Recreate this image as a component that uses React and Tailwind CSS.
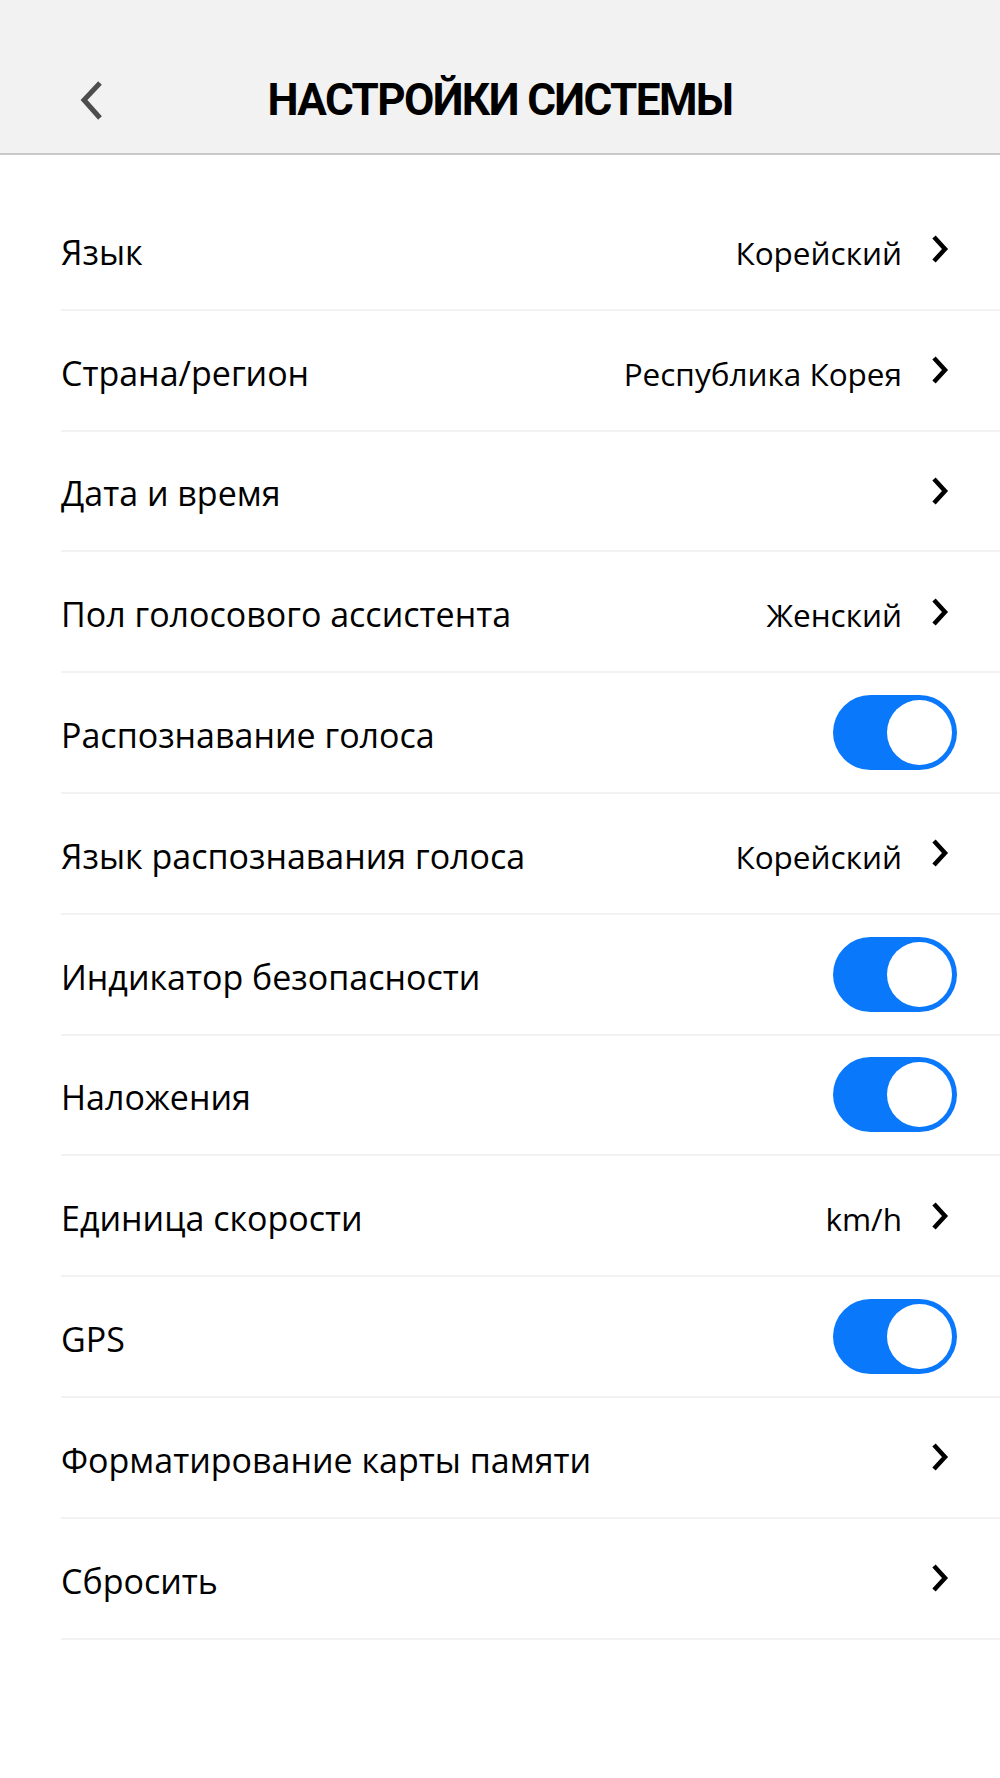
import React from "react";

const rows = [
  { label: "Язык", value: "Корейский", type: "link" },
  { label: "Страна/регион", value: "Республика Корея", type: "link" },
  { label: "Дата и время", value: "", type: "link" },
  { label: "Пол голосового ассистента", value: "Женский", type: "link" },
  { label: "Распознавание голоса", type: "toggle" },
  { label: "Язык распознавания голоса", value: "Корейский", type: "link" },
  { label: "Индикатор безопасности", type: "toggle" },
  { label: "Наложения", type: "toggle" },
  { label: "Единица скорости", value: "km/h", type: "link" },
  { label: "GPS", type: "toggle" },
  { label: "Форматирование карты памяти", value: "", type: "link" },
  { label: "Сбросить", value: "", type: "link" },
];

function Chevron() {
  return (
    <svg width="20" height="30" viewBox="0 0 20 30" className="shrink-0">
      <path d="M4 3 L15 15 L4 27" fill="none" stroke="#000" strokeWidth="4.5" strokeLinecap="butt" strokeLinejoin="miter" />
    </svg>
  );
}

function Toggle() {
  return (
    <div className="w-[124px] h-[75px] rounded-full bg-[#0a78fb] relative -mr-[7px] shrink-0">
      <div className="absolute right-[5px] top-[5px] w-[65px] h-[65px] rounded-full bg-white"></div>
    </div>
  );
}

export default function App() {
  return (
    <div className="w-[1000px] min-h-[1778px] bg-white text-black" style={{ fontFamily: "'Open Sans', 'Noto Sans', sans-serif" }}>
      <div className="h-[155px] bg-[#f2f2f2] border-b-2 border-[#c8c8c8] relative flex items-center justify-center">
        <div className="absolute left-[76px] top-[80px]">
          <svg width="30" height="42" viewBox="0 0 30 42">
            <path d="M24 3 L8 20 L24 38" fill="none" stroke="#4d4d4d" strokeWidth="5" />
          </svg>
        </div>
        <h1 className="text-[44px] font-bold tracking-[-1.6px] mt-[46px] leading-none" style={{ fontFamily: "'Roboto', 'Liberation Sans', sans-serif" }}>
          НАСТРОЙКИ СИСТЕМЫ
        </h1>
      </div>
      <div className="pt-[35px] pl-[61px]">
        {rows.map((r, i) => (
          <div key={i} className="h-[120.8px] border-b-2 border-[#f2f2f2] flex items-center justify-between pr-[50px]">
            <span className="text-[34px] mt-[6px]">{r.label}</span>
            {r.type === "toggle" ? (
              <Toggle />
            ) : (
              <div className="flex items-center gap-[28px]">
                {r.value ? <span className="text-[31.5px] mt-[6px]">{r.value}</span> : null}
                <Chevron />
              </div>
            )}
          </div>
        ))}
      </div>
    </div>
  );
}
